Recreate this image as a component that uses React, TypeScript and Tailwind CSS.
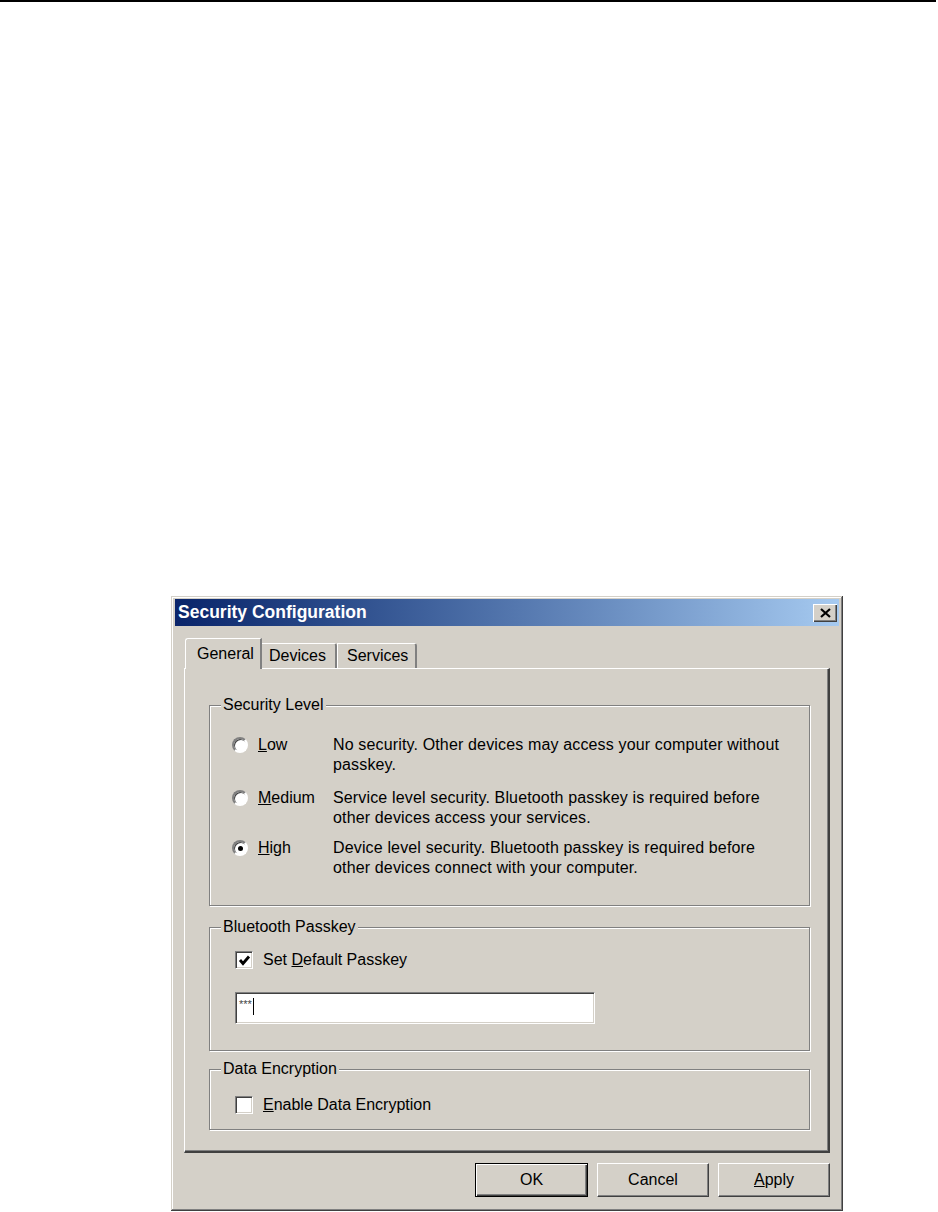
import type { ReactNode } from "react";

function Radio({ checked }: { checked?: boolean }) {
  return (
    <span className="mt-[2px] flex h-4 w-4 shrink-0 items-center justify-center rounded-full border-2 border-t-[#808080] border-l-[#808080] border-r-white border-b-white bg-white shadow-[inset_1px_1px_0_#404040]">
      {checked && <span className="h-[5px] w-[5px] rounded-full bg-black" />}
    </span>
  );
}

function Checkbox({ checked }: { checked?: boolean }) {
  return (
    <span className="flex h-[18px] w-[18px] shrink-0 items-center justify-center border border-t-[#808080] border-l-[#808080] border-r-white border-b-white bg-white shadow-[inset_1px_1px_0_#404040,inset_-1px_-1px_0_#d4d0c8]">
      {checked && (
        <svg width="13" height="13" viewBox="0 0 13 13">
          <polyline points="2,6 5,9.5 11,2.5" fill="none" stroke="#000" strokeWidth="2.8" />
        </svg>
      )}
    </span>
  );
}

function Group({ title, className, children }: { title: string; className?: string; children: ReactNode }) {
  return (
    <fieldset className={`w-[601px] border border-[#808080] shadow-[inset_1px_1px_0_#fff,1px_1px_0_#fff] ${className ?? ""}`}>
      <legend className="ml-[11px] bg-[#d4d0c8] px-[2px] leading-[18px]">{title}</legend>
      {children}
    </fieldset>
  );
}

function SecurityRow({ label, accel, checked, lines, className }: { label: string; accel: string; checked?: boolean; lines: string[]; className?: string }) {
  return (
    <div className={`flex items-start leading-[20px] ${className ?? ""}`}>
      <Radio checked={checked} />
      <span className="ml-[10px] w-[75px]">
        <u>{accel}</u>
        {label}
      </span>
      <span className="whitespace-nowrap tracking-[0.15px]">
        {lines[0]}
        <br />
        {lines[1]}
      </span>
    </div>
  );
}

export default function App() {
  return (
    <div className="h-[1212px] w-[938px] bg-white font-['Liberation_Sans',Arial,sans-serif] text-[16px] text-black">
      <div className="h-[2px] w-[936px] bg-black" />

      {/* dialog window */}
      <div className="ml-[171px] mt-[594px] w-[672px] bg-[#d4d0c8] px-[4px] pb-[4px] pt-[3px] shadow-[inset_-1px_-1px_0_#404040,inset_1px_1px_0_#d4d0c8,inset_-2px_-2px_0_#808080,inset_2px_2px_0_#fff]">
        {/* title bar */}
        <div className="flex h-[27px] items-center justify-between bg-linear-to-r from-[#0a246a] to-[#a6caf0] pl-[3px] pr-[2px]">
          <span className="text-[17.5px] font-bold text-white">Security Configuration</span>
          <span className="flex h-[18px] w-[24px] items-center justify-center bg-[#d4d0c8] shadow-[inset_1px_1px_0_#fff,inset_-1px_-1px_0_#404040,inset_-2px_-2px_0_#808080]">
            <svg width="11" height="10" viewBox="0 0 11 10">
              <path d="M1 1 L10 9 M10 1 L1 9" stroke="#000" strokeWidth="2.2" />
            </svg>
          </span>
        </div>

        <div className="px-[9px] pb-[10px] pt-[12px]">
          {/* tabs */}
          <div className="flex h-[30px] items-end pl-[1px] leading-[18px]">
            <div className="relative z-10 -mb-px h-[31px] w-[77px] rounded-tl-[3px] border-l border-t border-r-2 border-l-white border-t-white border-r-[#808080] bg-[#d4d0c8] pl-[11px] pt-[6px]">
              General
            </div>
            <div className="h-[25px] w-[75px] rounded-tr-[3px] border-t border-r-2 border-t-white border-r-[#808080] pl-[7px] pt-[3px]">
              Devices
            </div>
            <div className="h-[25px] w-[80px] rounded-tr-[3px] border-l border-t border-r-2 border-l-white border-t-white border-r-[#808080] pl-[9px] pt-[3px]">
              Services
            </div>
          </div>

          {/* tab panel */}
          <div className="w-[646px] border-l border-t border-r-2 border-b-2 border-l-white border-t-white border-r-[#404040] border-b-[#404040] pb-[21px] pl-[24px] pt-[27px] shadow-[inset_-1px_-1px_0_#808080]">
            <Group title="Security Level">
              <div className="pb-[27px] pl-[22px] pt-[21px]">
                <SecurityRow
                  accel="L"
                  label="ow"
                  lines={["No security. Other devices may access your computer without", "passkey."]}
                />
                <SecurityRow
                  className="mt-[13px]"
                  accel="M"
                  label="edium"
                  lines={["Service level security. Bluetooth passkey is required before", "other devices access your services."]}
                />
                <SecurityRow
                  className="mt-[10px]"
                  accel="H"
                  label="igh"
                  checked
                  lines={["Device level security. Bluetooth passkey is required before", "other devices connect with your computer."]}
                />
              </div>
            </Group>

            <Group title="Bluetooth Passkey" className="mt-[12px]">
              <div className="pb-[26px] pl-[25px] pt-[14px]">
                <div className="flex items-center gap-[10px] leading-[20px]">
                  <Checkbox checked />
                  <span>
                    Set <u>D</u>efault Passkey
                  </span>
                </div>
                <div className="mt-[22px] flex h-[32px] w-[360px] items-start border border-t-[#808080] border-l-[#808080] border-r-white border-b-white bg-white pl-[3px] pt-[5px] shadow-[inset_1px_1px_0_#404040,inset_-1px_-1px_0_#d4d0c8]">
                  <span className="text-[11px] leading-[12px] text-[#444]">***</span>
                  <span className="ml-px h-[17px] w-px bg-black" />
                </div>
              </div>
            </Group>

            <Group title="Data Encryption" className="mt-[9px]">
              <div className="pb-[14px] pl-[25px] pt-[17px]">
                <div className="flex items-center gap-[10px] leading-[20px]">
                  <Checkbox />
                  <span>
                    <u>E</u>nable Data Encryption
                  </span>
                </div>
              </div>
            </Group>
          </div>

          {/* buttons */}
          <div className="mt-[10px] flex justify-end gap-[9px]">
            <button className="h-[34px] w-[113px] border border-black bg-[#d4d0c8] shadow-[inset_1px_1px_0_#fff,inset_-1px_-1px_0_#404040,inset_-2px_-2px_0_#808080]">
              OK
            </button>
            <button className="h-[34px] w-[112px] border border-t-white border-l-white border-r-[#404040] border-b-[#404040] bg-[#d4d0c8] shadow-[inset_-1px_-1px_0_#808080]">
              Cancel
            </button>
            <button className="h-[34px] w-[112px] border border-t-white border-l-white border-r-[#404040] border-b-[#404040] bg-[#d4d0c8] shadow-[inset_-1px_-1px_0_#808080]">
              <u>A</u>pply
            </button>
          </div>
        </div>
      </div>
    </div>
  );
}
